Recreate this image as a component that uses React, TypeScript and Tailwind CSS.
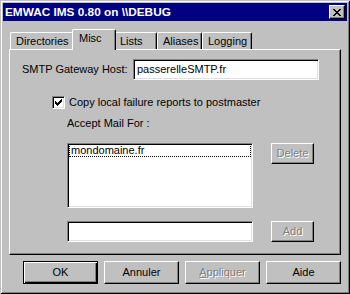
import React from "react";

const raised =
  "border border-t-white border-l-white border-r-black border-b-black shadow-[inset_-1px_-1px_#808080]";
const sunken =
  "border border-t-[#808080] border-l-[#808080] border-r-white border-b-white shadow-[inset_1px_1px_#000,inset_-1px_-1px_#dfdfdf] bg-white";

function CloseGlyph() {
  const rows = [
    [0, 1, 6, 7],
    [1, 2, 5, 6],
    [2, 3, 4, 5],
    [3, 4],
    [2, 3, 4, 5],
    [1, 2, 5, 6],
    [0, 1, 6, 7],
  ];
  return (
    <svg width="8" height="7" viewBox="0 0 8 7" shapeRendering="crispEdges">
      {rows.map((r, y) =>
        r.map((x) => <rect key={`${x}-${y}`} x={x} y={y} width="1" height="1" fill="#000" />)
      )}
    </svg>
  );
}

function CheckGlyph() {
  const rows: number[][] = [
    [6],
    [5, 6],
    [0, 4, 5, 6],
    [0, 1, 3, 4, 5],
    [0, 1, 2, 3, 4],
    [1, 2, 3],
    [2],
  ];
  return (
    <svg width="7" height="7" viewBox="0 0 7 7" shapeRendering="crispEdges">
      {rows.map((r, y) =>
        r.map((x) => <rect key={`${x}-${y}`} x={x} y={y} width="1" height="1" fill="#000" />)
      )}
    </svg>
  );
}

function Tab({ label, w, selected }: { label: string; w: string; selected?: boolean }) {
  if (selected) {
    return (
      <div
        className={`relative z-10 ${w} h-[21px] -mb-[1px] -mx-[2px] bg-[#c0c0c0] border-l border-t border-r border-t-white border-l-white border-r-black rounded-tl-[2px] rounded-tr-[2px] shadow-[inset_-1px_0_#808080] pl-[6px] pt-[2px] leading-[13px]`}
      >
        {label}
      </div>
    );
  }
  return (
    <div
      className={`${w} h-[17px] bg-[#c0c0c0] border-l border-t border-r border-t-white border-l-white border-r-black rounded-tl-[2px] rounded-tr-[2px] shadow-[inset_-1px_0_#808080] pl-[5px] pt-[2px] leading-[13px]`}
    >
      {label}
    </div>
  );
}

function Disabled({ children }: { children: React.ReactNode }) {
  return <span className="text-[#808080] [text-shadow:1px_1px_0_#fff]">{children}</span>;
}

export default function App() {
  return (
    <div className="w-[350px] h-[294px] bg-[#c0c0c0] p-[3px] shadow-[inset_1px_1px_#c0c0c0,inset_-1px_-1px_#000,inset_2px_2px_#fff,inset_-2px_-2px_#808080] flex flex-col font-['Liberation_Sans',Arial,sans-serif] text-[11px] text-black leading-[13px]">
      {/* Title bar */}
      <div className="h-[18px] bg-[#000080] flex items-center justify-between pl-[2px] pr-[2px]">
        <span className="text-white font-bold text-[11.8px] leading-[14px]">EMWAC IMS 0.80 on \\DEBUG</span>
        <div className={`w-[16px] h-[14px] bg-[#c0c0c0] ${raised} flex items-center justify-center`}>
          <CloseGlyph />
        </div>
      </div>

      <div className="px-[6px] flex flex-col">
        {/* Tabs */}
        <div className="mt-[8px] h-[20px] flex items-end pl-[1px]">
          <Tab label="Directories" w="w-[64px]" />
          <Tab label="Misc" w="w-[44px]" selected />
          <Tab label="Lists" w="w-[43px]" />
          <Tab label="Aliases" w="w-[45px]" />
          <Tab label="Logging" w="w-[50px]" />
        </div>

        {/* Panel */}
        <div className={`h-[206px] ${raised} flex flex-col`}>
          <div className="mt-[9px] flex items-center pl-[12px]">
            <span className="w-[111px]">SMTP Gateway Host:</span>
            <div className={`w-[186px] h-[21px] ${sunken} flex items-center pl-[3px]`}>passerelleSMTP.fr</div>
          </div>

          <div className="mt-[16px] h-[13px] flex items-center pl-[42px]">
            <div className={`w-[13px] h-[13px] ${sunken} flex items-center justify-center`}>
              <CheckGlyph />
            </div>
            <span className="ml-[4px]">Copy local failure reports to postmaster</span>
          </div>

          <div className="mt-[8px] h-[13px] pl-[57px]">Accept Mail For :</div>

          <div className="mt-[13px] flex items-start pl-[57px]">
            <div className={`w-[186px] h-[65px] ${sunken} p-[1px]`}>
              <div className="h-[13px] border border-dotted border-black flex items-center pl-[1px] -mt-[1px]">
                mondomaine.fr
              </div>
            </div>
            <div className={`ml-[18px] w-[43px] h-[21px] ${raised} flex items-center justify-center`}>
              <Disabled>Delete</Disabled>
            </div>
          </div>

          <div className="mt-[13px] flex items-start pl-[57px]">
            <div className={`w-[186px] h-[21px] ${sunken}`}></div>
            <div className={`ml-[18px] w-[43px] h-[21px] ${raised} flex items-center justify-center`}>
              <Disabled>Add</Disabled>
            </div>
          </div>
        </div>

        {/* Buttons */}
        <div className="mt-[6px] flex justify-end gap-[6px]">
          <div className="w-[75px] h-[23px] border border-black shadow-[inset_1px_1px_#fff,inset_-1px_-1px_#000,inset_-2px_-2px_#808080] flex items-center justify-center">
            OK
          </div>
          <div className={`w-[75px] h-[23px] ${raised} flex items-center justify-center`}>Annuler</div>
          <div className={`w-[75px] h-[23px] ${raised} flex items-center justify-center`}>
            <Disabled>
              <span className="underline">A</span>ppliquer
            </Disabled>
          </div>
          <div className={`w-[75px] h-[23px] ${raised} flex items-center justify-center`}>Aide</div>
        </div>
      </div>
    </div>
  );
}
